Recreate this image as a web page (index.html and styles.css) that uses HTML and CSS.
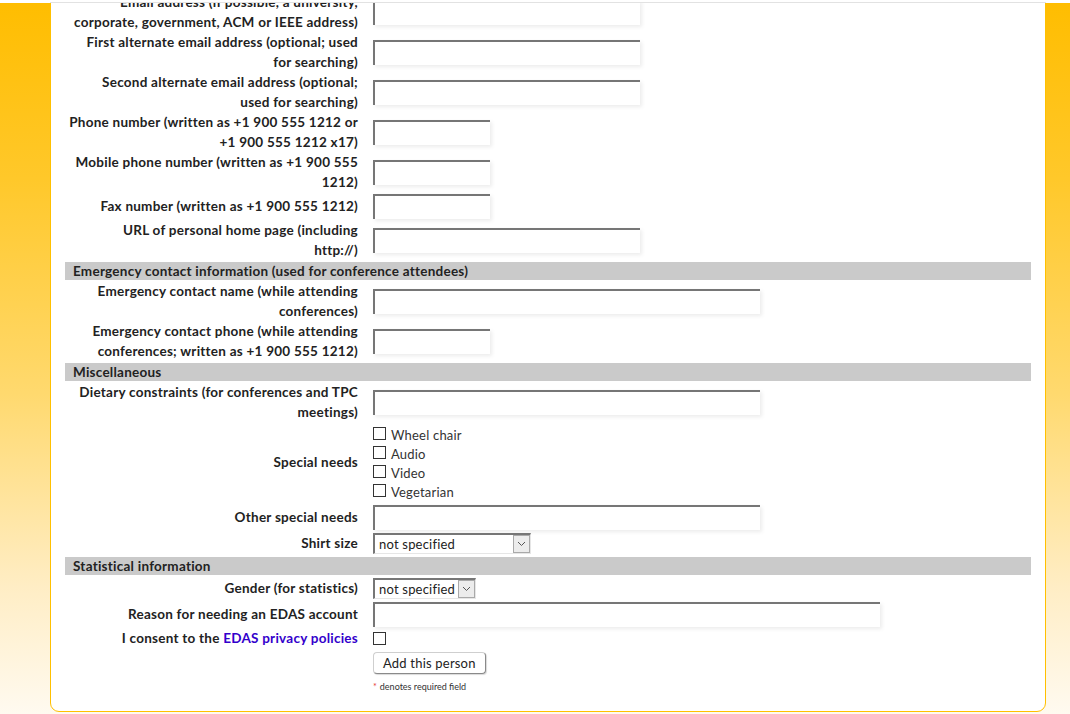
FILE: index.html
```html
<!doctype html>
<html>
<head>
<meta charset="utf-8">
<title>Add person</title>
<link rel="stylesheet" href="styles.css">
</head>
<body>

<div class="topbar"><div class="topbar-line"></div></div>

<div class="panel">
    <div class="form">
        <label class="lbl">Email address (if possible, a university,<br>corporate, government, ACM or IEEE address)</label>
        <div class="fld"><input type="text" class="txt w-l"></div>

        <label class="lbl">First alternate email address (optional; used<br>for searching)</label>
        <div class="fld"><input type="text" class="txt w-l"></div>

        <label class="lbl">Second alternate email address (optional;<br>used for searching)</label>
        <div class="fld"><input type="text" class="txt w-l"></div>

        <label class="lbl">Phone number (written as +1 900 555 1212 or<br>+1 900 555 1212 x17)</label>
        <div class="fld"><input type="text" class="txt w-s"></div>

        <label class="lbl">Mobile phone number (written as +1 900 555<br>1212)</label>
        <div class="fld"><input type="text" class="txt w-s"></div>

        <label class="lbl">Fax number (written as +1 900 555 1212)</label>
        <div class="fld"><input type="text" class="txt w-s"></div>

        <label class="lbl">URL of personal home page (including<br>http://)</label>
        <div class="fld"><input type="text" class="txt w-l"></div>

        <div class="sect">Emergency contact information (used for conference attendees)</div>

        <label class="lbl">Emergency contact name (while attending<br>conferences)</label>
        <div class="fld"><input type="text" class="txt w-m"></div>

        <label class="lbl">Emergency contact phone (while attending<br>conferences; written as +1 900 555 1212)</label>
        <div class="fld"><input type="text" class="txt w-s"></div>

        <div class="sect">Miscellaneous</div>

        <label class="lbl">Dietary constraints (for conferences and TPC<br>meetings)</label>
        <div class="fld"><input type="text" class="txt w-m"></div>

        <label class="lbl">Special needs</label>
        <div class="fld checks">
            <label class="chk"><input type="checkbox" class="box">Wheel chair</label>
            <label class="chk"><input type="checkbox" class="box">Audio</label>
            <label class="chk"><input type="checkbox" class="box">Video</label>
            <label class="chk"><input type="checkbox" class="box">Vegetarian</label>
        </div>

        <label class="lbl">Other special needs</label>
        <div class="fld"><input type="text" class="txt w-m"></div>

        <label class="lbl">Shirt size</label>
        <div class="fld">
            <span class="sel sel-shirt">
                <span class="sel-val">not specified</span>
                <span class="sel-btn"><svg width="9" height="6" viewBox="0 0 9 6"><path d="M1 1 L4.5 4.5 L8 1" fill="none" stroke="#555" stroke-width="1"/></svg></span>
            </span>
        </div>

        <div class="sect">Statistical information</div>

        <label class="lbl">Gender (for statistics)</label>
        <div class="fld">
            <span class="sel sel-gender">
                <span class="sel-val">not specified</span>
                <span class="sel-btn"><svg width="9" height="6" viewBox="0 0 9 6"><path d="M1 1 L4.5 4.5 L8 1" fill="none" stroke="#555" stroke-width="1"/></svg></span>
            </span>
        </div>

        <label class="lbl">Reason for needing an EDAS account</label>
        <div class="fld"><input type="text" class="txt w-xl"></div>

        <label class="lbl">I consent to the <a href="#">EDAS privacy policies</a></label>
        <div class="fld"><input type="checkbox" class="box"></div>

        <div class="lbl"></div>
        <div class="fld"><button type="button" class="btn">Add this person</button></div>

        <div class="lbl"></div>
        <div class="fld note"><span class="req">*</span> denotes required field</div>
    </div>
</div>

</body>
</html>
```

FILE: styles.css
```css
*{ margin: 0; padding: 0; box-sizing: border-box; }
html, body{ height: 100%; }
body{ font-family: Lato, "Liberation Sans", sans-serif; font-size: 13px; color: #222; overflow: hidden;
      background: linear-gradient(#ffbd00 0, #ffc82a 25%, #ffd96e 55%, #ffedc4 82%, #fffaf0 100%); }

/* strip at the top edge */
.topbar{ position: fixed; top: 0; left: 0; right: 0; height: 3px; background: #fff; z-index: 2; }
.topbar-line{ margin: 2px 24px 0 50px; border-top: 1px solid #e2e2e2; }

/* white card */
.panel{ width: 996px; margin: -8px 0 0 50px; padding: 0 14px 19px; background: #fff; border: 1px solid #ffc000; border-radius: 9px; }

.form{ display: grid; grid-template-columns: 297px 1fr; column-gap: 11px; row-gap: 1px; align-items: center; }
.lbl{ text-align: right; font-weight: bold; font-size: 13.5px; letter-spacing: .25px; line-height: 19.5px; padding-right: 4px; }
.lbl a{ color: #3300cc; text-decoration: none; }
.fld{ padding: 1px 0; display: flex; align-items: center; }

.sect{ grid-column: 1 / -1; background: #cacaca; height: 18px; line-height: 19px; padding-left: 8px; font-weight: bold; font-size: 13.5px; letter-spacing: .25px; margin: 1px 0 1px; }

/* text boxes */
.txt{ height: 25px; border: none; border-top: 2px solid #767676; border-left: 2px solid #767676; background: #fff; box-shadow: 2px 2px 4px rgba(0,0,0,.08); font: 13px Lato, sans-serif; padding: 0 4px; outline: none; }
.w-s{ width: 117px; }
.w-l{ width: 267px; }
.w-m{ width: 387px; }
.w-xl{ width: 507px; }

/* checkboxes */
.box{ -webkit-appearance: none; appearance: none; width: 13px; height: 13px; border: 1px solid #333; background: #fff; flex: none; }
.checks{ flex-direction: column; align-items: flex-start; padding: 2px 0; }
.chk{ display: flex; align-items: center; height: 19px; color: #333; font-weight: normal; letter-spacing: .2px; }
.chk .box{ margin-right: 5px; margin-top: -2px; }

/* dropdowns */
.sel{ display: inline-flex; align-items: stretch; height: 21px; border-top: 2px solid #767676; border-left: 2px solid #767676; border-right: 1px solid #e6e6e6; border-bottom: 1px solid #e6e6e6; background: #fff; }
.sel-val{ flex: 1; padding-left: 4px; line-height: 19px; color: #222; letter-spacing: .2px; }
.sel-btn{ width: 17px; border: 1px solid #a9a9a9; background: #ececec; display: flex; align-items: center; justify-content: center; }
.sel-shirt{ width: 158px; }
.sel-gender{ width: 103px; }

.btn{ height: 22px; padding: 0 9px; margin-top: 1px; font: 13px Lato, sans-serif; letter-spacing: .2px; color: #222; background: #fff; border: 1px solid #cfcfcf; border-right-color: #8a8a8a; border-bottom-color: #8a8a8a; border-radius: 4px; box-shadow: 1px 1px 1px rgba(0,0,0,.15); }

.note{ font-size: 9px; color: #333; padding: 5px 0 0; }
.req{ color: #e53935; margin-right: 3px; }
```
